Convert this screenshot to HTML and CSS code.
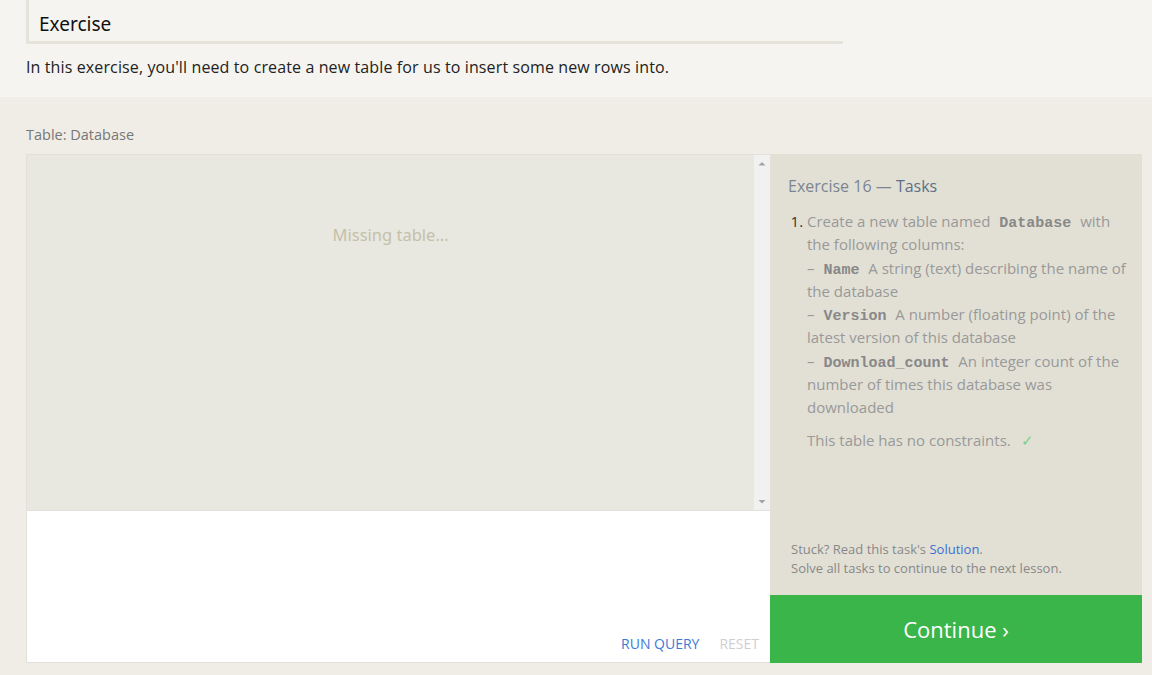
FILE: index.html
```html
<!DOCTYPE html>
<html>
<head>
<meta charset="utf-8">
<link rel="stylesheet" href="styles.css">
</head>
<body>
<section class="intro">
  <h2 class="heading">Exercise</h2>
  <p class="lead">In this exercise, you'll need to create a new table for us to insert some new rows into.</p>
</section>
<section class="workspace">
  <div class="label">Table: Database</div>
  <div class="panel">
    <div class="left">
      <div class="viewer">
        <div class="viewer-body">Missing table…</div>
        <div class="scrollbar">
          <svg width="16" height="16" viewBox="0 0 16 16"><path d="M4.5 10.5 L8 7 L11.5 10.5 Z" fill="#a3a3a3"/></svg>
          <svg width="16" height="16" viewBox="0 0 16 16"><path d="M4.5 6 L8 9.5 L11.5 6 Z" fill="#a3a3a3"/></svg>
        </div>
      </div>
      <div class="editor">
        <div class="actions">
          <span class="run">RUN QUERY</span>
          <span class="reset">RESET</span>
        </div>
      </div>
    </div>
    <div class="right">
      <div class="tasks">
        <div class="tasks-title">Exercise 16 — <span class="tasks-word">Tasks</span></div>
        <ol class="task-list">
          <li>
            <div class="task-text">Create a new table named <code>Database</code> with the following columns:<br>
            – <code>Name</code> A string (text) describing the name of the database<br>
            – <code>Version</code> A number (floating point) of the latest version of this database<br>
            – <code>Download_count</code> An integer count of the number of times this database was downloaded</div>
            <div class="constraint">This table has no constraints. <span class="check">✓</span></div>
          </li>
        </ol>
        <div class="help">
          <div>Stuck? Read this task's <a class="solution">Solution</a>.</div>
          <div>Solve all tasks to continue to the next lesson.</div>
        </div>
      </div>
      <div class="continue">Continue ›</div>
    </div>
  </div>
</section>
</body>
</html>
```
FILE: styles.css
```css
html, body {
  margin: 0;
  padding: 0;
}
body {
  font-family: "Open Sans", "Noto Sans", sans-serif;
  color: #222;
  background: #efede6;
  width: 1152px;
  height: 675px;
  overflow: hidden;
}
.intro {
  background: #f5f4f0;
  padding: 0 0 0 26px;
  height: 97px;
  box-sizing: border-box;
}
.heading {
  margin: 0;
  width: 804px;
  font-family: "Noto Sans", sans-serif;
  font-weight: 400;
  font-size: 19px;
  line-height: 24px;
  padding: 12px 0 5px 10px;
  border-left: 3px solid #e6e4da;
  border-bottom: 3px solid #e6e4da;
  color: #111;
}
.lead {
  margin: 12px 0 0;
  font-size: 16px;
  line-height: 22px;
  letter-spacing: 0.12px;
  color: #222;
}
.workspace {
  padding: 28px 10px 0 26px;
}
.label {
  font-size: 14.5px;
  color: #777;
  line-height: 20px;
  margin-bottom: 9px;
}
.panel {
  display: flex;
  height: 509px;
}
.left {
  width: 744px;
  display: flex;
  flex-direction: column;
  border: 1px solid #e2e0d8;
  border-right: none;
  box-sizing: border-box;
}
.viewer {
  height: 355px;
  display: flex;
  background: #e9e8e0;
  border-bottom: 1px solid #e2e0d8;
}
.viewer-body {
  flex: 1;
  text-align: center;
  padding-top: 68px;
  font-size: 16.5px;
  color: #c4c0a9;
  font-family: "Noto Sans", sans-serif;
}
.scrollbar {
  width: 16px;
  background: #f1f1f1;
  display: flex;
  flex-direction: column;
  justify-content: space-between;
}
.scrollbar svg {
  display: block;
}
.editor {
  flex: 1;
  background: #fff;
  display: flex;
  flex-direction: column;
  justify-content: flex-end;
}
.actions {
  display: flex;
  justify-content: flex-end;
  gap: 20px;
  padding: 0 11px 8px 0;
  font-size: 14px;
  line-height: 20px;
}
.run { color: #3c7ad6; }
.reset { color: #cfcfcf; }
.right {
  width: 372px;
  display: flex;
  flex-direction: column;
}
.tasks {
  flex: 1;
  background: #e2e0d5;
  padding: 21px 10px 17px 18px;
  display: flex;
  flex-direction: column;
}
.tasks-title {
  font-size: 16px;
  line-height: 22px;
  color: #7b8593;
}
.tasks-word { color: #5e7087; }
.task-list {
  margin: 13px 0 0;
  padding: 0 0 0 19px;
  color: #333;
  font-size: 15px;
  line-height: 23.25px;
}
.task-text {
  color: #999;
}
code {
  font-family: "Liberation Mono", "DejaVu Sans Mono", monospace;
  font-weight: bold;
  font-size: 15px;
  line-height: 1;
  color: #888;
  padding: 0 5px 0 5px;
}
.constraint {
  margin-top: 10px;
  color: #999;
  line-height: 22px;
}
.check {
  color: #7dce8a;
  margin-left: 6px;
}
.help {
  margin-top: auto;
  font-size: 13px;
  line-height: 19px;
  color: #888;
  padding-left: 3px;
}
.solution { color: #3a6fd8; }
.continue {
  height: 68px;
  background: #3ab54a;
  color: #fff;
  font-size: 22px;
  display: flex;
  align-items: center;
  justify-content: center;
}
```
